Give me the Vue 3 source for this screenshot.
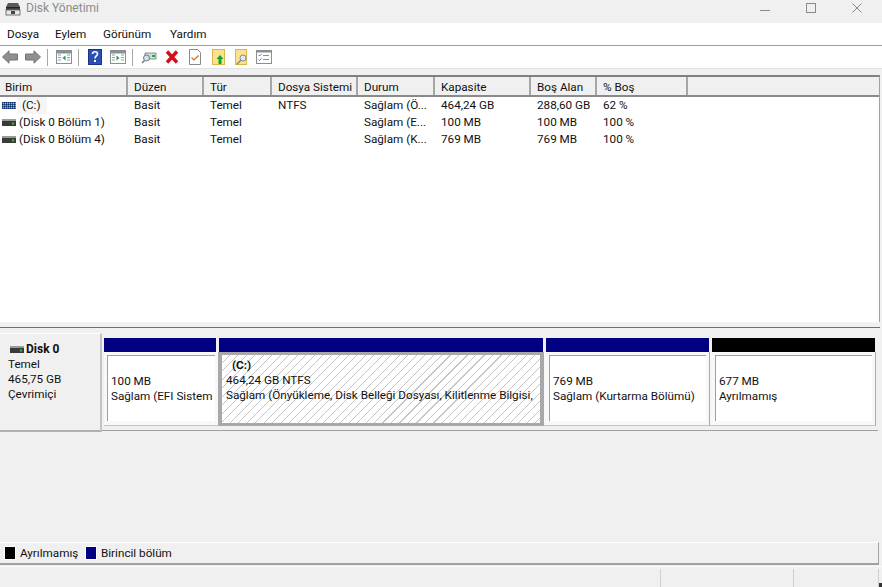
<script setup>
const menus = ['Dosya', 'Eylem', 'Görünüm', 'Yardım']
const cols = [
  ['Birim', 128], ['Düzen', 76], ['Tür', 68], ['Dosya Sistemi', 86],
  ['Durum', 77], ['Kapasite', 96], ['Boş Alan', 66], ['% Boş', 91]
]
const rows = [
  { name: '(C:)', kind: 'stripe', cells: ['Basit', 'Temel', 'NTFS', 'Sağlam (Ö...', '464,24 GB', '288,60 GB', '62 %'] },
  { name: '(Disk 0 Bölüm 1)', kind: 'disk', cells: ['Basit', 'Temel', '', 'Sağlam (E...', '100 MB', '100 MB', '100 %'] },
  { name: '(Disk 0 Bölüm 4)', kind: 'disk', cells: ['Basit', 'Temel', '', 'Sağlam (K...', '769 MB', '769 MB', '100 %'] }
]
</script>

<template>
  <div class="win">
    <header class="title">
      <svg class="appicon" width="16" height="14" viewBox="0 0 16 14">
        <path d="M3 1h10l2 4v3H1V5z" fill="#5a5a5a" />
        <rect x="1" y="5" width="14" height="1.5" fill="#222" />
        <rect x="1" y="8" width="14" height="5" fill="#e8e8e8" stroke="#555" stroke-width=".8" />
        <rect x="6" y="9" width="4" height="3" fill="#444" />
      </svg>
      <span class="titletext">Disk Yönetimi</span>
      <div class="winctl">
        <svg width="12" height="12" viewBox="0 0 12 12"><path d="M1 8.5h10" stroke="#8a8a8a" /></svg>
        <svg width="12" height="12" viewBox="0 0 12 12"><rect x="1.5" y="1.5" width="9" height="9" fill="none" stroke="#8a8a8a" /></svg>
        <svg width="12" height="12" viewBox="0 0 12 12"><path d="M1.5 1.5l9 9M10.5 1.5l-9 9" stroke="#8a8a8a" /></svg>
      </div>
    </header>

    <nav class="menu">
      <span v-for="m in menus" :key="m" class="mi">{{ m }}</span>
    </nav>

    <div class="toolbar">
      <svg class="tb" viewBox="0 0 16 14"><path d="M0.5 7L7 .8v3.200h8.500v6H7v3.200z" fill="#8f8f8f" stroke="#737373" /></svg>
      <svg class="tb" viewBox="0 0 16 14"><path d="M15.500 7L9 .8v3.200H.5v6H9v3.200z" fill="#8f8f8f" stroke="#737373" /></svg>
      <i class="sep"></i>
      <svg class="tb" viewBox="0 0 16 14">
        <rect x=".5" y=".5" width="15" height="13" fill="#fff" stroke="#8a8f94" /><rect x="1" y="1" width="14" height="2.5" fill="#8a8f94" />
        <path d="M2 5h3M2 7.5h3M2 10h3M11 5h3M11 7.5h3M11 10h3" stroke="#8a9fb0" /><path d="M9.5 5.5v5L6.5 8z" fill="#23a043" />
      </svg>
      <i class="sep"></i>
      <svg class="tb" viewBox="0 0 16 16">
        <rect x="1.5" y=".5" width="13" height="15" fill="#2b4fb5" stroke="#1b3488" />
        <path d="M5.5 5c0-3 5-3 5 0 0 2-2.500 2-2.500 4.500" fill="none" stroke="#fff" stroke-width="1.600" /><rect x="7" y="11" width="2" height="2" fill="#fff" />
      </svg>
      <svg class="tb" viewBox="0 0 16 14">
        <rect x=".5" y=".5" width="15" height="13" fill="#fff" stroke="#8a8f94" /><rect x="1" y="1" width="14" height="2.5" fill="#8a8f94" />
        <path d="M2 5h3M2 7.5h3M2 10h3M11 5h3M11 7.5h3M11 10h3" stroke="#8a9fb0" /><path d="M6.500 5.500v5L9.500 8z" fill="#23a043" />
      </svg>
      <i class="sep"></i>
      <svg class="tb" viewBox="0 0 16 14">
        <path d="M4 3h11v6H4z" fill="#d5d8dc" stroke="#777" stroke-width=".8" /><rect x="11" y="5" width="3" height="2" fill="#16b030" />
        <circle cx="5.500" cy="8" r="3" fill="#cfe3f2" stroke="#6a7a88" /><path d="M3.500 10.500L1 13" stroke="#8a7a60" stroke-width="1.600" />
      </svg>
      <svg class="tb" viewBox="0 0 16 16"><path d="M3 2.500l10 11M13 2.500l-10 11" stroke="#d4101a" stroke-width="3.400" /></svg>
      <svg class="tb" viewBox="0 0 16 16">
        <path d="M2.500 .5h8l3 3v12h-11z" fill="#fff" stroke="#8a8a8a" /><path d="M4.500 8.500l2.500 2.500 4.500-4.500" fill="none" stroke="#e0632a" stroke-width="1.200" />
      </svg>
      <svg class="tb" viewBox="0 0 16 16">
        <rect x="2.500" y=".5" width="12" height="15" fill="#fbe38e" stroke="#d8b84e" /><path d="M10 6l3.500 4H11.500v5h-3v-5H6.500z" fill="#12a52a" />
      </svg>
      <svg class="tb" viewBox="0 0 16 16">
        <rect x="2.500" y=".5" width="11" height="15" fill="#fbe38e" stroke="#d8b84e" /><circle cx="10" cy="9" r="3" fill="#dcebf5" stroke="#7f8c99" />
        <path d="M7.800 11.200l-4 4" stroke="#8a8a8a" stroke-width="1.600" />
      </svg>
      <svg class="tb" viewBox="0 0 16 14">
        <rect x=".5" y=".5" width="15" height="13" fill="#fff" stroke="#8a8f94" /><rect x="1" y="1" width="14" height="1.500" fill="#8a8f94" />
        <path d="M2.500 5l1 1 2-2M2.500 9.500l1 1 2-2" fill="none" stroke="#2a7fd0" /><path d="M7 5.500h6M7 9.500h6" stroke="#8a8f94" />
      </svg>
    </div>

    <section class="list">
      <div class="listhead">
        <div v-for="c in cols" :key="c[0]" class="hcell" :style="{ width: c[1] + 'px' }">{{ c[0] }}</div>
      </div>
      <div class="listbody">
        <div v-for="r in rows" :key="r.name" class="row">
          <div class="namecell">
            <svg v-if="r.kind === 'stripe'" class="vol" width="14" height="7" viewBox="0 0 14 7">
              <defs>
                <pattern id="chk" width="2" height="2" patternUnits="userSpaceOnUse">
                  <rect width="2" height="2" fill="#1c6fb8" /><rect width="1" height="1" fill="#0a2f6a" /><rect x="1" y="1" width="1" height="1" fill="#7fb6e0" />
                </pattern>
              </defs>
              <rect width="14" height="7" fill="url(#chk)" />
            </svg>
            <svg v-else class="vol" width="14" height="7" viewBox="0 0 14 7">
              <rect y="0" width="14" height="2" fill="#9a9a9a" /><rect y="2" width="14" height="5" fill="#3a3a3a" /><rect x="10" y="3.500" width="2" height="2" fill="#1fd13a" />
            </svg>
            <span :class="{ cname: r.kind === 'stripe' }">{{ r.name }}</span>
          </div>
          <div v-for="(t, i) in r.cells" :key="i" class="cell" :style="{ width: cols[i + 1][1] + 'px' }">{{ t }}</div>
        </div>
      </div>
    </section>

    <div class="split"></div>

    <section class="graph">
      <div class="diskrow">
        <div class="disklabel">
          <div class="dname">
            <svg width="14" height="7" viewBox="0 0 14 7">
              <rect width="14" height="2" fill="#9a9a9a" /><rect y="2" width="14" height="5" fill="#3a3a3a" /><rect x="10" y="3.500" width="2" height="2" fill="#1fd13a" />
            </svg>
            <b>Disk 0</b>
          </div>
          <div>Temel</div>
          <div>465,75 GB</div>
          <div>Çevrimiçi</div>
        </div>
        <div class="parts">
          <div class="part efi">
            <div class="cap"></div>
            <div class="box"><div class="inner"><span class="l1">&nbsp;</span><span>100 MB</span><span>Sağlam (EFI Sistem</span></div></div>
          </div>
          <div class="part sys">
            <div class="cap"></div>
            <div class="box sel"><div class="inner hatch"><b class="l1 cl">(C:)</b><span>464,24 GB NTFS</span><span>Sağlam (Önyükleme, Disk Belleği Dosyası, Kilitlenme Bilgisi,</span></div></div>
          </div>
          <div class="part rec">
            <div class="cap"></div>
            <div class="box"><div class="inner"><span class="l1">&nbsp;</span><span>769 MB</span><span>Sağlam (Kurtarma Bölümü)</span></div></div>
          </div>
          <div class="part una">
            <div class="cap black"></div>
            <div class="box"><div class="inner"><span class="l1">&nbsp;</span><span>677 MB</span><span>Ayrılmamış</span></div></div>
          </div>
        </div>
      </div>
      <div class="spacer"></div>
      <div class="legend">
        <i class="sw black"></i><span class="lg">Ayrılmamış</span>
        <i class="sw navy"></i><span>Birincil bölüm</span>
      </div>
    </section>

    <footer class="status">
      <div class="st s1"></div>
      <div class="st s2"></div>
      <div class="st s3"></div>
      <div class="grip"></div>
    </footer>
  </div>
</template>

<style>
html, body { margin: 0; background: #f0f0f0; }
</style>

<style scoped>
.win {
  position: relative;
  width: 882px;
  height: 587px;
  overflow: hidden;
  display: flex;
  flex-direction: column;
  background: #f0f0f0;
  font: 11.700px/16px Roboto, "Noto Sans", sans-serif;
  color: #111;
}
.title { height: 23px; display: flex; align-items: center; padding-left: 5px; box-sizing: border-box; background: #f0f0f0; }
.appicon { margin-top: -6px; }
.titletext { margin-left: 5px; margin-top: -8px; color: #8b8b8b; font-size: 12px; }
.winctl { margin-left: auto; display: flex; gap: 34px; padding-right: 19px; margin-top: -8px; }
.menu { height: 22px; background: #fff; display: flex; align-items: center; padding-left: 7px; border-bottom: 1px solid #a0a0a0; box-sizing: content-box; }
.mi { width: 48px; }
.mi:nth-child(3) { width: 67px; }
.toolbar { height: 22px; background: #fff; display: flex; align-items: center; gap: 7px; padding-left: 2px; border-bottom: 1px solid #e3e3e3; }
.tb { width: 16px; height: 16px; flex: none; }
.sep { width: 1px; height: 17px; background: #a8a8a8; margin: 0 1px 0 -1px; flex: none; }
.list { margin-top: 6px; height: 245px; display: flex; flex-direction: column; background: #fff; border-top: 2px solid #808080; margin-right: 2px; border-right: 1px solid #a0a0a0; }
.listhead { height: 18px; display: flex; background: #f0f0f0; border-bottom: 2px solid #8a8a8a; flex: none; }
.hcell { box-sizing: border-box; border-right: 2px solid #a6a6a6; line-height: 21px; height: 18px; flex: none; padding-left: 6px; white-space: nowrap; }
.hcell:first-child { padding-left: 5px; }
.listbody { flex: 1; }
.row { height: 17px; display: flex; line-height: 17px; }
.namecell { width: 128px; flex: none; display: flex; align-items: center; box-sizing: border-box; padding-left: 2px; gap: 3px; }
.vol { flex: none; }
.cname { background: #f5f5f5; padding: 0 5px; margin-left: -2px; width: 20px; }
.cell { box-sizing: border-box; padding-left: 6px; flex: none; white-space: nowrap; }
.split { height: 5px; background: #f0f0f0; border-bottom: 1px solid #707070; margin-right: 2px; }
.graph { flex: 1; display: flex; flex-direction: column; min-height: 0; padding-top: 5px; }
.diskrow { display: flex; height: 98px; margin-right: 4px; border-bottom: 1px solid #a0a0a0; box-sizing: border-box; }
.disklabel { width: 102px; flex: none; box-sizing: border-box; padding: 8px 0 0 8px; line-height: 15px; border-right: 2px solid #c4c4c4; border-bottom: 2px solid #b0b0b0; height: 99px; background: #f0f0f0; border-top: 1px solid #fff; }
.dname { display: flex; align-items: center; gap: 2px; padding-left: 2px; }
.dname b { font-weight: 700; font-size: 12px; }
.parts { flex: 1; display: flex; padding-top: 5px; padding-left: 2px; }
.part { display: flex; flex-direction: column; flex: none; }
.efi { width: 114px; }
.sys { width: 326px; }
.rec { width: 166px; }
.una { width: 166px; }
.cap { height: 14px; background: #000080; margin: 0 1px 0 2px; flex: none; }
.efi .cap { margin: 0 2px 0 0; }
.sys .cap { margin: 0 1px; }
.cap.black { background: #000; }
.box { height: 74px; background: #f8f8f8; padding: 3px 3px 4px 5px; box-sizing: border-box; display: flex; border-bottom: 1px solid #c4c4c4; border-right: 1px solid #a8a8a8; }
.efi .box { padding-left: 3px; padding-right: 3px; border-right: 0; }
.box.sel { background: #a8a8a8; border: 0; padding: 3px 4px; }
.inner { flex: 1; background: #fff; border-left: 1px solid #a0a0a0; border-top: 1px solid #a0a0a0; display: flex; flex-direction: column; padding: 0 0 0 3px; line-height: 15px; white-space: nowrap; overflow: hidden; min-width: 0; }
.l1 { height: 15px; margin-top: 3px; }
.cl { padding-left: 6px; }
.inner.hatch { border: 0; padding-left: 4px; background: repeating-linear-gradient(135deg, #fff 0 5.200px, #c4c4c4 5.200px 6px); }
.spacer { flex: 1; }
.legend { height: 20px; display: flex; align-items: center; gap: 4px; padding-left: 4px; border-top: 1px solid #fff; border-right: 1px solid #a0a0a0; border-bottom: 2px solid #a0a0a0; margin-right: 3px; box-sizing: content-box; }
.lg { width: 61px; }
.sw { width: 10px; height: 12px; border: 1px solid #fff; flex: none; }
.sw.black { background: #000; }
.sw.navy { background: #000080; }
.status { height: 20px; display: flex; margin-top: 1px; border-top: 1px solid #fafafa; position: relative; }
.st { border-right: 1px solid #d0d0d0; margin-top: 2px; box-sizing: border-box; }
.s1 { width: 661px; }
.s2 { width: 133px; }
.s3 { width: 85px; }
.grip { position: absolute; right: 0; bottom: 0; width: 3px; height: 4px; background: #333; }
</style>
